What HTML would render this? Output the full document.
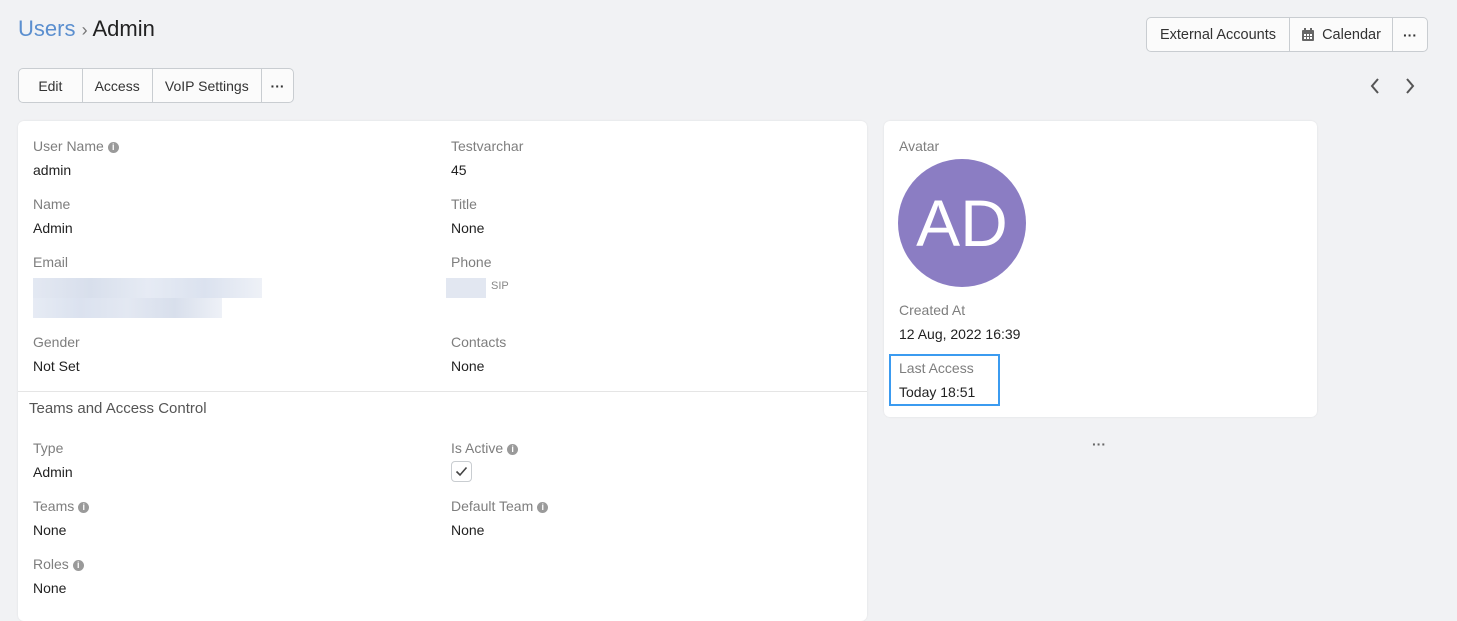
<!DOCTYPE html>
<html><head><style>
body{margin:0;width:1457px;height:606px;background:#f1f2f4;font-family:"Liberation Sans",sans-serif;position:relative;overflow:hidden;color:#333;}
.a{position:absolute;}
.lbl{position:absolute;font-size:14px;color:#7e7e7e;}
.val{position:absolute;font-size:14px;color:#222;}
.btns{position:absolute;display:flex;border:1px solid #c9cdd1;border-radius:5px;background:#fbfbfb;height:35px;box-sizing:border-box;}
.btns div{display:flex;align-items:center;justify-content:center;font-size:14px;color:#333;border-right:1px solid #c9cdd1;box-sizing:border-box;}
.btns div:last-child{border-right:none;}
.card{position:absolute;background:#fff;border-radius:6px;box-shadow:0 0 2px rgba(0,0,0,.08);}
.i{display:inline-block;width:11px;height:11px;border-radius:50%;background:#9a9a9a;color:#fff;font-size:9px;line-height:11px;text-align:center;font-weight:bold;vertical-align:1px;margin-left:4px;}
.blur{position:absolute;background:#dde4f0;}
</style></head><body>
<div class="a" style="left:18px;top:16px;font-size:22px;"><span style="color:#5b8fcf">Users</span> <span style="color:#777;font-size:18px">›</span> <span style="color:#222">Admin</span></div>
<div class="btns" style="left:18px;top:68px;width:276px;">
<div style="width:64px">Edit</div><div style="width:70px">Access</div><div style="width:110px">VoIP Settings</div><div style="width:31px;font-weight:bold">···</div></div>
<div class="btns" style="left:1146px;top:17px;width:282px;">
<div style="width:143px;font-size:14.5px">External Accounts</div><div style="width:103px;font-size:14.5px"><svg width="14" height="14" viewBox="0 0 14 14" style="margin-right:7px"><rect x="1" y="2" width="12" height="11" rx="1" fill="#666"/><g fill="#fff"><rect x="3" y="6" width="2" height="2"/><rect x="6" y="6" width="2" height="2"/><rect x="9" y="6" width="2" height="2"/><rect x="3" y="9" width="2" height="2"/><rect x="6" y="9" width="2" height="2"/><rect x="9" y="9" width="2" height="2"/></g><rect x="3" y="0" width="2" height="3" fill="#666"/><rect x="9" y="0" width="2" height="3" fill="#666"/></svg>Calendar</div><div style="width:34px;font-weight:bold">···</div></div>
<svg class="a" style="left:1366px;top:77px" width="54" height="18"><path d="M12 2 L6 9 L12 16" stroke="#555" stroke-width="2" fill="none"/><path d="M41 2 L47 9 L41 16" stroke="#555" stroke-width="2" fill="none"/></svg>

<div class="card" style="left:18px;top:121px;width:849px;height:500px;">
<div style="position:absolute;left:0;right:0;top:270px;border-top:1px solid #e5e5e5"></div>
</div>
<div class="lbl" style="left:33px;top:138px">User Name<span class="i">i</span></div><div class="val" style="left:33px;top:162px">admin</div>
<div class="lbl" style="left:451px;top:138px">Testvarchar</div><div class="val" style="left:451px;top:162px">45</div>
<div class="lbl" style="left:33px;top:196px">Name</div><div class="val" style="left:33px;top:220px">Admin</div>
<div class="lbl" style="left:451px;top:196px">Title</div><div class="val" style="left:451px;top:220px">None</div>
<div class="lbl" style="left:33px;top:254px">Email</div>
<div class="blur" style="left:33px;top:278px;width:229px;height:20px;background:linear-gradient(90deg,#e3e8f2,#d8dfec,#e6ebf4,#dbe2ef,#eef1f7)"></div>
<div class="blur" style="left:33px;top:298px;width:189px;height:20px;background:linear-gradient(90deg,#e6ebf4,#dbe2ef,#e3e8f2,#d8dfec,#eef1f7)"></div>
<div class="lbl" style="left:451px;top:254px">Phone</div>
<div class="blur" style="left:446px;top:278px;width:40px;height:20px;background:#e2e7f1"></div><div class="a" style="left:491px;top:280px;font-size:11px;color:#888">SIP</div>
<div class="lbl" style="left:33px;top:334px">Gender</div><div class="val" style="left:33px;top:358px">Not Set</div>
<div class="lbl" style="left:451px;top:334px">Contacts</div><div class="val" style="left:451px;top:358px">None</div>
<div class="a" style="left:29px;top:400px;font-size:15px;color:#555">Teams and Access Control</div>
<div class="lbl" style="left:33px;top:440px">Type</div><div class="val" style="left:33px;top:464px">Admin</div>
<div class="lbl" style="left:451px;top:440px">Is Active<span class="i">i</span></div>
<div class="a" style="left:451px;top:461px;width:21px;height:21px;border:1px solid #c9cdd1;border-radius:4px;box-sizing:border-box"><svg width="19" height="19"><path d="M4.5 9.5 L8 13 L14.5 5.5" stroke="#444" stroke-width="1.6" fill="none"/></svg></div>
<div class="lbl" style="left:33px;top:498px">Teams<span class="i">i</span></div><div class="val" style="left:33px;top:522px">None</div>
<div class="lbl" style="left:451px;top:498px">Default Team<span class="i">i</span></div><div class="val" style="left:451px;top:522px">None</div>
<div class="lbl" style="left:33px;top:556px">Roles<span class="i">i</span></div><div class="val" style="left:33px;top:580px">None</div>

<div class="card" style="left:884px;top:121px;width:433px;height:296px;"></div>
<div class="lbl" style="left:899px;top:138px">Avatar</div>
<div class="a" style="left:898px;top:159px;width:128px;height:128px;border-radius:50%;background:#8b7dc3;color:#fff;font-size:66px;line-height:128px;text-align:center;">AD</div>
<div class="lbl" style="left:899px;top:302px">Created At</div><div class="val" style="left:899px;top:326px">12 Aug, 2022 16:39</div>
<div class="a" style="left:889px;top:354px;width:111px;height:52px;border:2px solid #3b9bf0;box-sizing:border-box"></div>
<div class="lbl" style="left:899px;top:360px">Last Access</div><div class="val" style="left:899px;top:384px">Today 18:51</div>
<div class="a" style="left:1092px;top:436px;font-size:14px;font-weight:bold;color:#666">···</div>
</body></html>
